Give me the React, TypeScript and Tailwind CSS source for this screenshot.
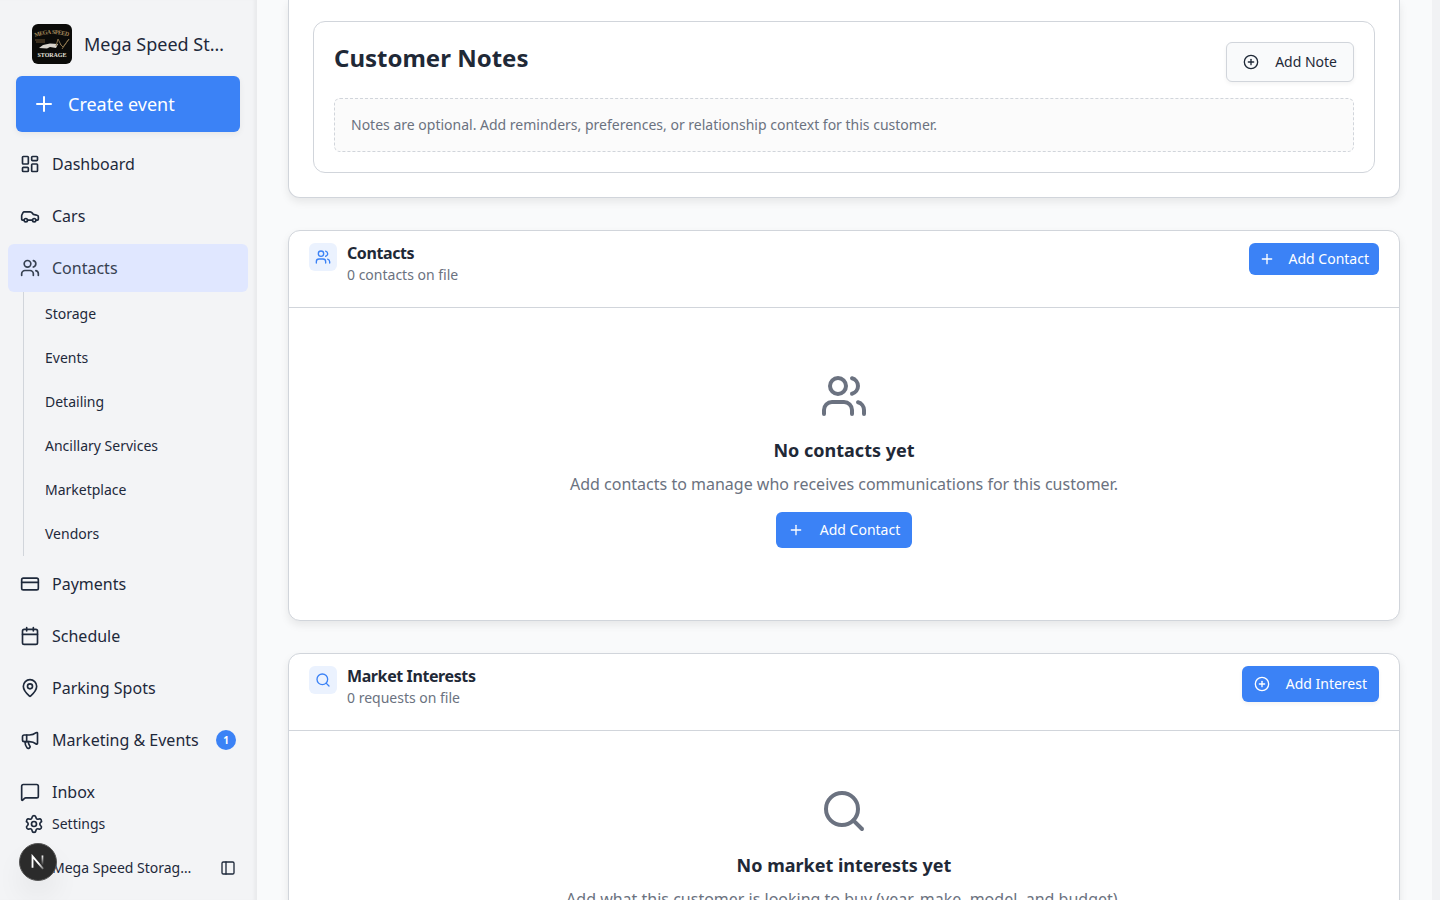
import type { LucideIcon } from "lucide-react"
import {
  Calendar,
  Car,
  CirclePlus,
  CreditCard,
  LayoutDashboard,
  MapPin,
  Megaphone,
  MessageSquare,
  PanelLeft,
  Plus,
  Search,
  Settings,
  Users,
} from "lucide-react"

const contactLinks = ["Storage", "Events", "Detailing", "Ancillary Services", "Marketplace", "Vendors"]

function Logo() {
  return (
    <svg viewBox="0 0 40 40" className="size-10 shrink-0 rounded-md bg-[#0b0b09]">
      <defs>
        <path id="logo-arc" d="M3 13 Q20 7 38 13" />
      </defs>
      <text fontFamily="Liberation Serif, serif" fontSize="6" fontWeight="700" fill="#a58a5c" wordSpacing="0.8" letterSpacing="-0.65">
        <textPath href="#logo-arc">MEGA SPEED</textPath>
      </text>
      <path d="M3 16h10M4 18h9" stroke="#6d5434" strokeWidth="1" />
      <path d="M7 24l4-3 7-1.5 8 .5-2 4-6-1-3 1.5z" fill="#d8d4cc" />
      <path d="M24 22l2-7 3 6M28 20l3 3 6-8-7 10" fill="none" stroke="#86714b" strokeWidth="1" />
      <text x="5.5" y="32.6" textLength="29" fontFamily="Liberation Serif, serif" fontSize="6" fontWeight="700" fill="#e5e2dc">
        STORAGE
      </text>
    </svg>
  )
}

function NavItem({ icon: Icon, label, active, badge }: { icon: LucideIcon; label: string; active?: boolean; badge?: number }) {
  return (
    <a
      className={`flex h-12 items-center gap-3 rounded-md px-3 ${active ? "bg-[#e0e7ff] text-[#374151]" : "text-[#1e293b]"}`}
    >
      <Icon className="size-5 shrink-0" />
      <span className="flex-1 whitespace-nowrap">{label}</span>
      {badge && (
        <span className="flex size-5 items-center justify-center rounded-full bg-[#3b82f6] text-[10px] font-bold text-white">
          {badge}
        </span>
      )}
    </a>
  )
}

function Sidebar() {
  return (
    <aside className="relative flex h-full w-[257px] shrink-0 flex-col bg-[#f3f4f6] pr-px text-[#1e293b] shadow-[inset_-4px_0_3px_-1px_rgba(0,0,0,0.04)]">
      <div className="flex items-center gap-3 pt-6 pr-6 pl-8">
        <Logo />
        <span className="truncate text-lg">Mega Speed Storage</span>
      </div>
      <button className="mx-4 mt-3 flex h-14 shrink-0 items-center gap-3 rounded-md bg-[#3b82f6] px-4 text-lg text-white shadow-[0_2px_6px_rgba(0,0,0,0.06)]">
        <Plus className="size-6" />
        Create event
      </button>

      <nav className="mt-2 flex flex-col gap-1 px-2">
        <NavItem icon={LayoutDashboard} label="Dashboard" />
        <NavItem icon={Car} label="Cars" />
        <div>
          <NavItem icon={Users} label="Contacts" active />
          <div className="ml-[15px] flex flex-col border-l border-[#d1d5db] pl-[21px] text-sm">
            {contactLinks.map((label) => (
              <a key={label} className="flex h-11 items-center">
                {label}
              </a>
            ))}
          </div>
        </div>
        <NavItem icon={CreditCard} label="Payments" />
        <NavItem icon={Calendar} label="Schedule" />
        <NavItem icon={MapPin} label="Parking Spots" />
        <NavItem icon={Megaphone} label="Marketing & Events" badge={1} />
        <NavItem icon={MessageSquare} label="Inbox" />
      </nav>

      <div className="-mt-3 flex h-10 shrink-0 items-center gap-2 pl-6 text-sm">
        <Settings className="size-5" />
        Settings
      </div>
      <div className="mt-1 flex h-10 items-center justify-between pr-5 pl-[52px] text-sm">
        <span className="w-[141px] truncate">Mega Speed Storage LLC</span>
        <PanelLeft className="size-4" />
      </div>

      <div className="absolute top-[843px] left-[19px] flex size-[38px] items-center justify-center rounded-full border border-[#555] bg-[#2b2b2b] shadow-[0_16px_32px_-8px_rgba(0,0,0,0.16)]">
        <svg viewBox="0 0 14 14" className="size-4" fill="none">
          <defs>
            <linearGradient id="n-diag" x1="8" y1="8" x2="12.5" y2="14" gradientUnits="userSpaceOnUse">
              <stop stopColor="#fff" />
              <stop offset="1" stopColor="#fff" stopOpacity="0.2" />
            </linearGradient>
            <linearGradient id="n-stem" x1="11" y1="1" x2="11" y2="10" gradientUnits="userSpaceOnUse">
              <stop stopColor="#fff" />
              <stop offset="1" stopColor="#fff" stopOpacity="0" />
            </linearGradient>
          </defs>
          <path d="M2.2 12V2l9.3 11" stroke="url(#n-diag)" strokeWidth="1.6" />
          <path d="M10.9 1.3v8.4" stroke="url(#n-stem)" strokeWidth="1.5" />
        </svg>
      </div>
    </aside>
  )
}

function SectionHeader({ icon: Icon, title, subtitle, children }: { icon: LucideIcon; title: string; subtitle: string; children: React.ReactNode }) {
  return (
    <div className="flex h-[77px] items-start justify-between border-b border-[#d1d5db] px-5 pt-3">
      <div className="flex gap-2.5">
        <div className="flex size-7 items-center justify-center rounded-md bg-[#ebf2fe] text-[#3b82f6]">
          <Icon className="size-4" />
        </div>
        <div>
          <h2 className="text-base leading-5 font-bold tracking-tight">{title}</h2>
          <p className="mt-0.5 text-sm text-[#6b7280]">{subtitle}</p>
        </div>
      </div>
      {children}
    </div>
  )
}

function EmptyState({ icon: Icon, title, text }: { icon: LucideIcon; title: string; text: string }) {
  return (
    <div className="flex flex-col items-center">
      <Icon className="size-12 text-[#6b7280]" />
      <h3 className="mt-4 text-lg leading-7 font-bold">{title}</h3>
      <p className="mt-2 leading-6 text-[#6b7280]">{text}</p>
    </div>
  )
}

export default function App() {
  return (
    <div className="flex h-screen overflow-hidden bg-[#f9fafb] font-['Noto_Sans',sans-serif] text-[#1e293b]">
      <Sidebar />

      <main className="flex h-full flex-1 flex-col gap-8 overflow-hidden pr-8 pl-[31px] text-[#1f2937]">
        <section className="h-[198px] shrink-0 rounded-b-xl border border-t-0 border-[#d1d5db] bg-white px-6 pt-[21px] shadow-[0_4px_8px_rgba(0,0,0,0.08)]">
          <div className="h-[152px] rounded-xl border border-[#d1d5db] p-5">
            <div className="flex items-start justify-between">
              <h2 className="text-2xl font-bold">Customer Notes</h2>
              <button className="flex h-10 items-center gap-4 rounded-md border border-[#d1d5db] bg-[#f9fafb] px-4 text-sm shadow-[0_2px_4px_rgba(0,0,0,0.05)]">
                <CirclePlus className="size-4" />
                Add Note
              </button>
            </div>
            <div className="mt-4 rounded-md border border-dashed border-[#d1d5db] bg-[#fbfbfb] p-4 text-sm text-[#6b7280]">
              Notes are optional. Add reminders, preferences, or relationship context for this customer.
            </div>
          </div>
        </section>

        <section className="h-[391px] shrink-0 rounded-xl border border-[#d1d5db] bg-white shadow-[0_4px_8px_rgba(0,0,0,0.08)]">
          <SectionHeader icon={Users} title="Contacts" subtitle="0 contacts on file">
            <button className="flex h-8 items-center gap-3.5 rounded-md bg-[#3b82f6] px-2.5 text-sm text-white">
              <Plus className="size-4" />
              Add Contact
            </button>
          </SectionHeader>
          <div className="flex flex-col items-center pt-16">
            <EmptyState
              icon={Users}
              title="No contacts yet"
              text="Add contacts to manage who receives communications for this customer."
            />
            <button className="mt-4 flex h-9 items-center gap-4 rounded-md bg-[#3b82f6] px-3 text-sm text-white">
              <Plus className="size-4" />
              Add Contact
            </button>
          </div>
        </section>

        <section className="h-[391px] shrink-0 rounded-xl border border-[#d1d5db] bg-white shadow-[0_4px_8px_rgba(0,0,0,0.08)]">
          <SectionHeader icon={Search} title="Market Interests" subtitle="0 requests on file">
            <button className="flex h-9 items-center gap-4 rounded-md bg-[#3b82f6] px-3 text-sm text-white shadow-[0_2px_4px_rgba(0,0,0,0.05)]">
              <CirclePlus className="size-4" />
              Add Interest
            </button>
          </SectionHeader>
          <div className="flex flex-col items-center pt-14">
            <EmptyState
              icon={Search}
              title="No market interests yet"
              text="Add what this customer is looking to buy (year, make, model, and budget)."
            />
          </div>
        </section>
      </main>
      <div className="h-full w-2 shrink-0 bg-[#f1f2f4]" />
    </div>
  )
}
